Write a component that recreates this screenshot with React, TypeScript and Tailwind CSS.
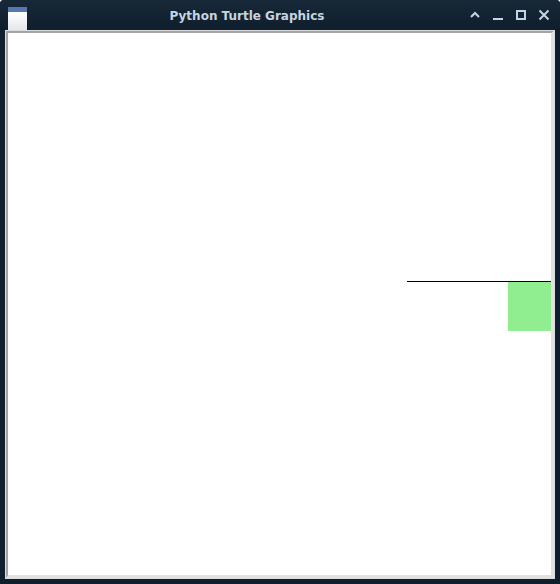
import React from 'react';

const TitleButtons: React.FC = () => (
  <div className="flex items-center gap-[7px] pr-[8px]">
    <svg width="16" height="16" viewBox="0 0 16 16" className="text-[#c3d5e4]">
      <path d="M4 10 L8 6 L12 10" stroke="currentColor" strokeWidth="2" fill="none" />
    </svg>
    <svg width="16" height="16" viewBox="0 0 16 16" className="text-[#c3d5e4]">
      <rect x="3" y="11" width="10" height="2" fill="currentColor" />
    </svg>
    <svg width="16" height="16" viewBox="0 0 16 16" className="text-[#c3d5e4]">
      <rect x="4" y="4" width="8" height="8" stroke="currentColor" strokeWidth="2" fill="none" />
    </svg>
    <svg width="16" height="16" viewBox="0 0 16 16" className="text-[#c3d5e4]">
      <path d="M3.5 3.5 L12.5 12.5 M12.5 3.5 L3.5 12.5" stroke="currentColor" strokeWidth="2" fill="none" />
    </svg>
  </div>
);

const App: React.FC = () => {
  return (
    <div className="w-[560px] h-[584px] bg-[#0f1f2e] rounded-t-[4px] flex flex-col overflow-hidden">
      {/* title bar */}
      <div className="h-[30px] flex items-center bg-gradient-to-b from-[#172838] to-[#0f1e2c]">
        <div className="ml-[8px] mt-[7px] w-[19px] h-[23px] flex flex-col self-start">
          <div className="h-[5px] bg-[#5579ad]" />
          <div className="flex-1 bg-gradient-to-b from-white to-[#e4e8ec]" />
        </div>
        <div
          className="flex-1 text-center text-[12px] font-bold text-[#c6d4e0] pt-[1px]"
          style={{ fontFamily: '"DejaVu Sans", sans-serif' }}
        >
          Python Turtle Graphics
        </div>
        <TitleButtons />
      </div>
      {/* canvas frame */}
      <div className="flex-1 mx-[5px] mb-[5px] border border-[#dcdcdc] flex">
        <div className="flex-1 border-t-2 border-l-2 border-[#a3a3a3] border-b-[3px] border-r-[3px] border-b-[#e2e2e2] border-r-[#e2e2e2] bg-white relative">
          <svg className="absolute left-0 top-0" width="543" height="543">
            <rect x="500" y="249" width="43" height="49" fill="#90ee90" />
            <line x1="399" y1="248.5" x2="543" y2="248.5" stroke="#000" strokeWidth="1" />
          </svg>
        </div>
      </div>
    </div>
  );
};

export default App;
